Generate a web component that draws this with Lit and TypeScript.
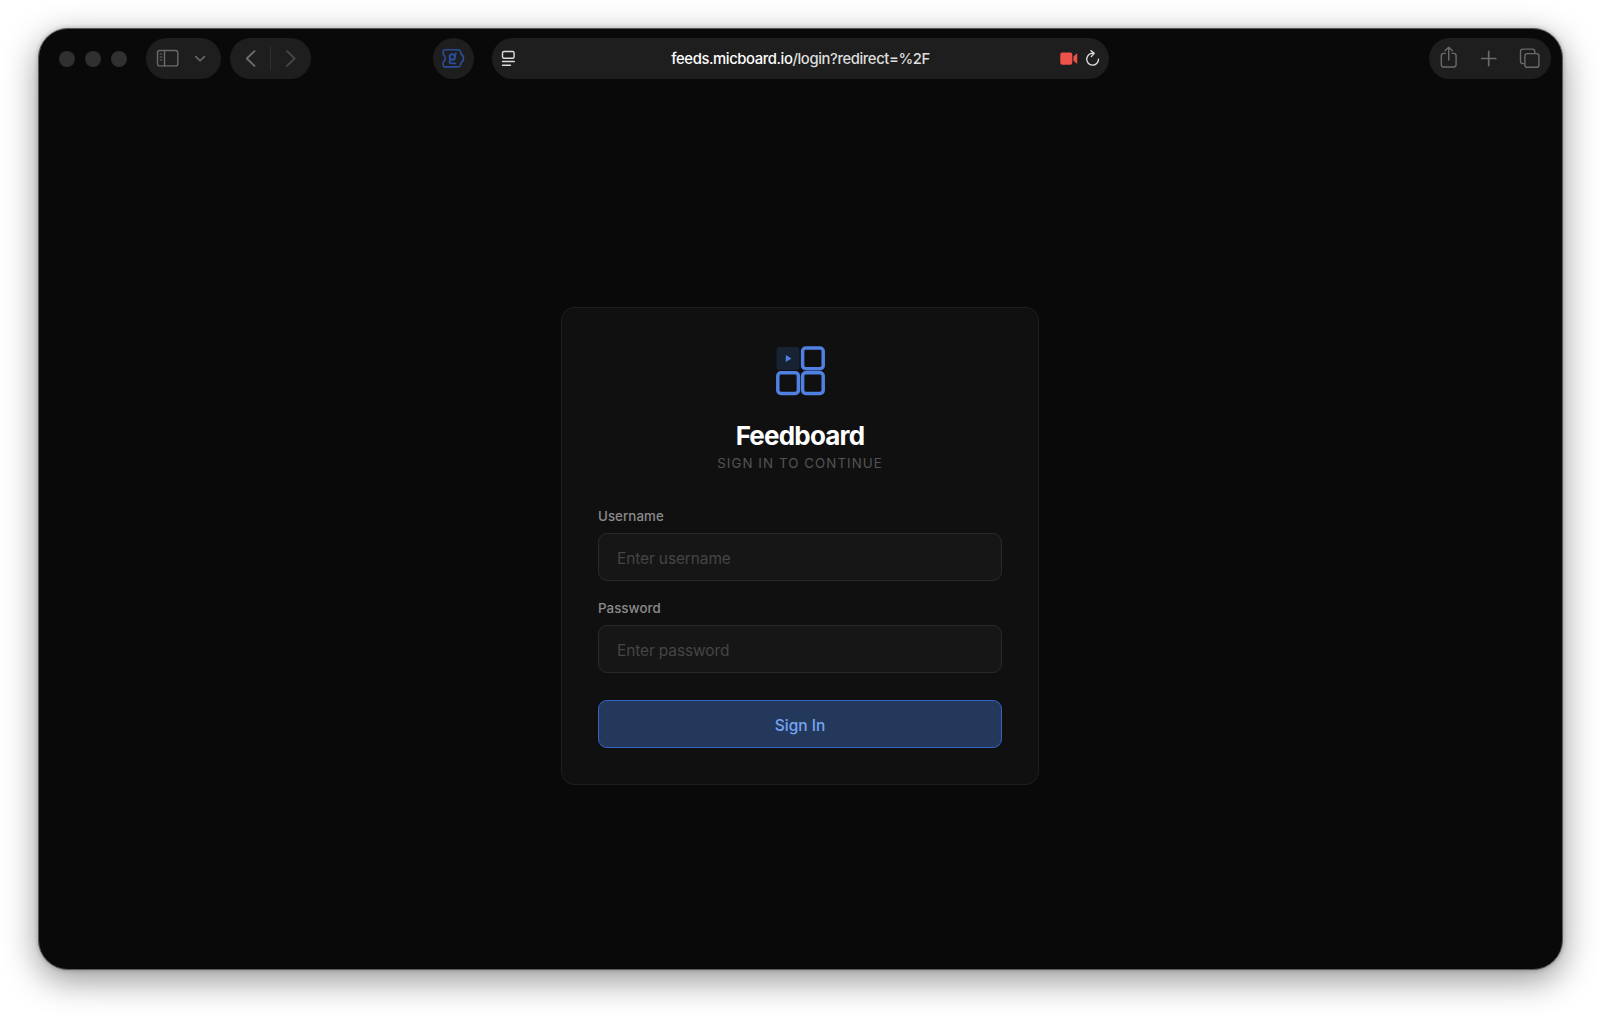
import { LitElement, html, css, svg } from "lit";
import { customElement, property } from "lit/decorators.js";

@customElement("browser-toolbar")
export class BrowserToolbar extends LitElement {
  static styles = css`
    :host { display: block; }
    .bar { display: flex; align-items: center; padding: 9px 11px 0 20px; height: 41px; }
    .lights { display: flex; gap: 10px; margin-right: 18.5px; }
    .light { width: 16px; height: 16px; border-radius: 50%; background: #303030; }
    .pill { display: flex; flex-shrink: 0; box-sizing: border-box; height: 41px; border-radius: 21px; background: #1e1e1e; color: #6a6a6a; }
    .pill svg { display: block; }
    .sidebar { width: 75px; margin-right: 9px; }
    .nav { width: 81px; }
    .extension { width: 41px; margin-left: 122px; color: #2b4d99; }
    .address { width: 617px; margin-left: 18px; align-items: center; justify-content: space-between; }
    .url { font: 500 14.8px/20px Inter, sans-serif; letter-spacing: -0.4px; color: #dedede; white-space: nowrap; padding-left: 1px; }
    .host { color: #fff; }
    .edge-left { width: 116px; }
    .tools { width: 122px; margin-left: auto; }
  `;

  render() {
    return html`
      <header class="bar">
        <div class="lights">
          <span class="light"></span><span class="light"></span><span class="light"></span>
        </div>
        <div class="pill sidebar">
          <svg width="75" height="41" fill="none" stroke="currentColor" stroke-width="1.4" stroke-linecap="round">
            <rect x="11.5" y="12.5" width="20.3" height="15.4" rx="2.2" />
            <path d="M18.5 12.5V28" />
            <path d="M14 16h2M14 19h2M14 22h2" stroke-width="1.1" />
            <path d="m49.8 18.6 4.3 4.2 4.3-4.2" stroke-width="1.6" stroke-linejoin="round" />
          </svg>
        </div>
        <div class="pill nav">
          <svg width="81" height="41" fill="none" stroke-width="1.8" stroke-linecap="round" stroke-linejoin="round">
            <path d="m24.5 13.2-7.7 7.3 7.7 7.3" stroke="#707070" />
            <path d="M40.5 9v23" stroke="#303030" stroke-width="1" />
            <path d="m57 13.2 7.7 7.3-7.7 7.3" stroke="#484848" />
          </svg>
        </div>
        <div class="pill extension">
          <svg width="41" height="41" fill="none" stroke="currentColor" stroke-width="1.6" stroke-linejoin="round" stroke-linecap="round">
            <path d="M12.4 11.7H25q2 0 2.5 1.8l.5 2.5q2.5 1.2 2.5 4.3T28 24.6l-.5 2.5q-.5 1.8-2.5 1.8H12.4q-2.2 0-2.2-2v-2.7c2.7-1.8 2.7-6 0-7.8v-2.7q0-2 2.2-2Z" />
            <ellipse cx="19.2" cy="19" rx="2.6" ry="2.7" stroke-width="1.9" />
            <path d="M22.8 15.2 21.9 18.5 21.4 21.6M17.3 21.6l-.9 2q0 1.7 1.8 1.700h4.200" stroke-width="1.8" />
          </svg>
        </div>
        <div class="pill address">
          <svg class="edge-left" width="116" height="41" fill="none" stroke="#dcdcdc" stroke-width="1.4" stroke-linecap="round">
            <rect x="10.5" y="13.5" width="11.600" height="6.8" rx="1.5" />
            <path d="M10.5 23.5h11.8M10.5 27.2h8" />
          </svg>
          <div class="url"><span class="host">feeds.micboard.io</span>/login?redirect=%2F</div>
          <svg width="116" height="41" fill="none">
            <rect x="68.3" y="14.5" width="12" height="12.2" rx="2" fill="#ef524b" />
            <path d="m81.4 18.6 3-2.8q.8-.4.8.5v8.6q0 .9-.8.5l-3-2.8Z" fill="#ef524b" />
            <path d="M101.1 15.3a5.9 5.9 0 1 0 5.4 5.9" stroke="#dcdcdc" stroke-width="1.4" stroke-linecap="round" />
            <path d="m99 12.7 3.2 2.7-2.9 3.2" stroke="#dcdcdc" stroke-width="1.4" stroke-linecap="round" stroke-linejoin="round" />
          </svg>
        </div>
        <div class="pill tools">
          <svg width="122" height="41" fill="none" stroke="currentColor" stroke-width="1.4" stroke-linecap="round" stroke-linejoin="round">
            <path d="M16.4 15.4h-1.7q-2.4 0-2.4 2.4v8.8q0 2.4 2.4 2.4h10q2.4 0 2.4-2.4v-8.8q0-2.4-2.4-2.4H23M19.7 22V9.4M16 12.7l3.7-3.5 3.7 3.5" />
            <path d="M59.7 13.4V27.6M52.6 20.5H66.8" stroke-width="1.7" />
            <rect x="95.9" y="15.6" width="14" height="13.7" rx="2.4" />
            <path d="M95.4 25.6h-1.5q-2.4 0-2.4-2.4V13.5q0-2.4 2.4-2.4h9.5q2.4 0 2.4 2.4v1.5" />
          </svg>
        </div>
      </header>
    `;
  }
}

@customElement("login-field")
export class LoginField extends LitElement {
  @property() label = "";
  @property() hint = "";
  @property() kind = "text";

  static styles = css`
    :host { display: block; }
    .field { display: flex; flex-direction: column; gap: 8px; }
    .label { font: 500 13.3px/18px Inter, sans-serif; color: #8b8b8b; letter-spacing: 0.06px; }
    .input {
      box-sizing: border-box; width: 100%; height: 48px; margin: 0; padding: 2px 18px 0; outline: none;
      border: 1px solid #2a2a2a; border-radius: 9px; background: #161616;
      font: 400 15.5px/20px Inter, sans-serif; letter-spacing: -0.13px; color: #eee;
    }
    .input::placeholder { color: #454545; opacity: 1; }
  `;

  render() {
    return html`
      <label class="field">
        <span class="label">${this.label}</span>
        <input class="input" type=${this.kind} placeholder=${this.hint} />
      </label>
    `;
  }
}

const tile = (x: number, y: number) =>
  svg`<rect x=${x} y=${y} width="20.6" height="20.6" rx="3.2" fill="none" stroke="#5080e2" stroke-width="3.5" />`;

@customElement("app-root")
export class AppRoot extends LitElement {
  static styles = css`
    :host { display: block; }
    .desktop { box-sizing: border-box; height: 1016px; padding: 28px 37px 46px 38px; background: #fff; overflow: hidden; }
    .window {
      box-sizing: border-box; display: flex; flex-direction: column; height: 942px;
      border: 1px solid #5a5a5a; border-radius: 30px; background: #090909;
      box-shadow: 0 10px 34px rgba(0, 0, 0, 0.42), 0 0 4px rgba(0, 0, 0, 0.25);
    }
    .page { flex: 1; display: flex; justify-content: center; align-items: flex-start; padding: 228px 1px 0 0; }
    .card {
      box-sizing: border-box; width: 478px; height: 478px; padding: 38px 36px 0;
      border: 1px solid #1e1e1e; border-radius: 13px; background: #101010;
      display: flex; flex-direction: column; font-family: Inter, sans-serif;
    }
    .logo { display: block; align-self: center; }
    .title { margin: 23px 0 0; text-align: center; font: 700 26px/34px Inter, sans-serif; letter-spacing: -0.8px; color: #fff; }
    .subtitle { margin: 0; text-align: center; font: 400 13.3px/20px Inter, sans-serif; letter-spacing: 1.08px; color: #545454; }
    .form { display: flex; flex-direction: column; gap: 18px; margin-top: 34px; }
    .submit {
      box-sizing: border-box; height: 48px; margin: 9px 0 0; padding: 3px 0 0; border: 1px solid #3763c6; border-radius: 9px;
      background: #24385c; color: #73a5f5; font: 500 15.5px/20px Inter, sans-serif;
    }
  `;

  render() {
    return html`
      <div class="desktop">
        <div class="window">
          <browser-toolbar></browser-toolbar>
          <main class="page">
            <section class="card">
              <svg class="logo" width="50" height="50" viewBox="0 0 50 50">
                <rect x="1.4" y="0.9" width="23" height="23" rx="3" fill="#172233" />
                <path d="m10.8 8.9 5.6 3.5-5.6 3.5Z" fill="#5080e2" />
                ${tile(27.6, 2.1)} ${tile(2.8, 26.8)} ${tile(27.6, 26.8)}
              </svg>
              <h1 class="title">Feedboard</h1>
              <p class="subtitle">SIGN IN TO CONTINUE</p>
              <div class="form">
                <login-field label="Username" hint="Enter username"></login-field>
                <login-field label="Password" hint="Enter password" kind="password"></login-field>
                <button class="submit" type="button">Sign In</button>
              </div>
            </section>
          </main>
        </div>
      </div>
    `;
  }
}
